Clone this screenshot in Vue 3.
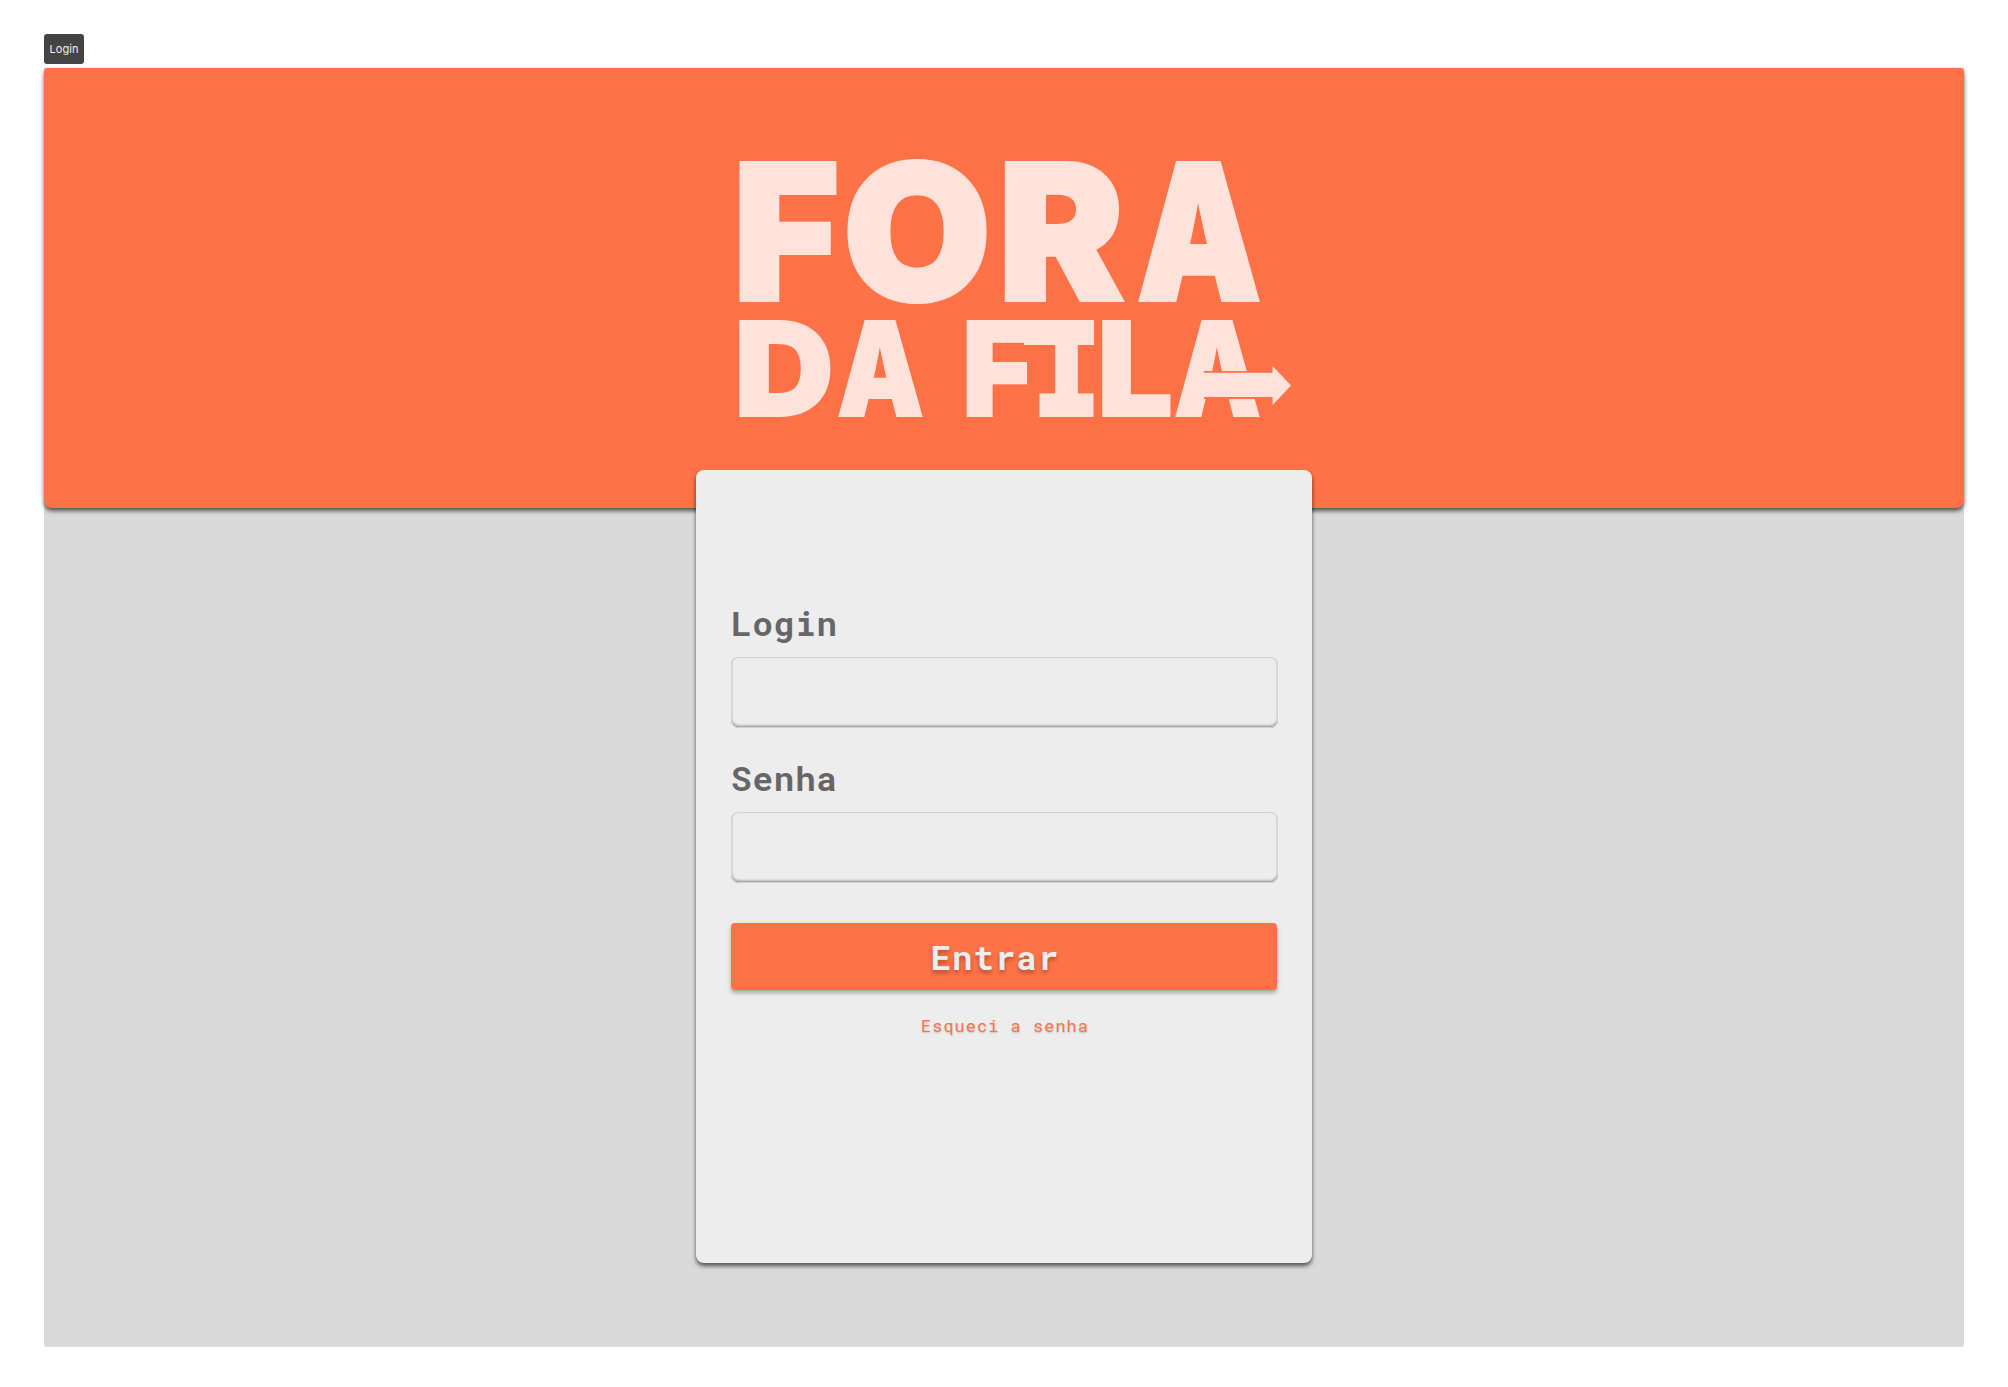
<script setup>
const rows = [
  {
    y: 300, size: 188, stroke: 4,
    letters: [
      { c: 'F', x: 733, w: 106 }, { c: 'O', x: 843, w: 148 },
      { c: 'R', x: 998, w: 126 }, { c: 'A', x: 1137, w: 124 },
    ],
  },
  {
    y: 415.5, size: 130.5, stroke: 2,
    letters: [
      { c: 'D', x: 734, w: 100 }, { c: 'A', x: 837, w: 87 },
      { c: 'F', x: 962, w: 71 }, { c: 'I', x: 1034, w: 65, y: 412.5, size: 122, slab: true },
      { c: 'L', x: 1097, w: 76 }, { c: 'A', x: 1174, w: 87 },
    ],
  },
]
</script>

<template>
  <div class="page">
    <div class="tag">Login</div>
    <main class="screen">
      <header class="banner">
        <svg class="logo" viewBox="730 150 570 275" width="570" height="275" role="img">
          <template v-for="row in rows" :key="row.y">
            <text
              v-for="l in row.letters" :key="l.x" :class="{ slab: l.slab }"
              :x="l.x" :y="l.y ?? row.y" :font-size="l.size ?? row.size" :stroke-width="l.slab ? 8 : row.stroke"
              :textLength="l.w" lengthAdjust="spacingAndGlyphs"
            >{{ l.c }}</text>
          </template>
          <rect x="1024" y="320" width="70" height="25" />
          <path class="arrow-gap" d="M1204 371H1271V365L1293 385.5L1271 406V399H1204Z" />
          <path d="M1200 372.7H1272.6V366L1291 385.5L1272.6 405V397H1200Z" />
        </svg>
      </header>
      <form class="card" @submit.prevent>
        <label for="user">Login</label>
        <input id="user" type="text">
        <label for="pass">Senha</label>
        <input id="pass" type="password">
        <button type="submit">Entrar</button>
        <a class="forgot">Esqueci a senha</a>
      </form>
    </main>
  </div>
</template>

<style>
body { margin: 0; background: #fff; }
</style>

<style scoped>
.page { box-sizing: border-box; width: 2008px; height: 1387px; padding: 34px 44px 0; overflow: hidden; }
.tag {
  display: flex; align-items: center; justify-content: center;
  width: 40px; height: 30px; border-radius: 3px; margin-bottom: 4px;
  background: #444; color: #eee; font: 11px/28px Inter, sans-serif; letter-spacing: .1px;
}
.screen { height: 1279px; width: 1920px; background: #d9d9d9; border-radius: 3px; }
.banner {
  height: 440px; border-radius: 3px 3px 8px 8px; background: #ff7247;
  box-shadow: 0 3px 4px rgba(0, 0, 0, .62);
}
.logo { display: block; margin-left: 686px; padding-top: 82px; overflow: visible; fill: #ffe3da; }
.logo text { font-family: Inter, sans-serif; font-weight: 900; stroke: #ffe3da; }
.logo text.slab { font-family: "DejaVu Sans Mono", monospace; font-weight: 700; }
.arrow-gap { fill: #ff7247; }
.card {
  box-sizing: border-box; position: relative; width: 616px; height: 793px; margin: -38px auto 0;
  padding: 133px 35px 0; display: flex; flex-direction: column;
  background: #ededed; border-radius: 8px; box-shadow: 0 3px 4px rgba(0, 0, 0, .62);
  font-family: "Roboto Mono", "DejaVu Sans Mono", monospace;
}
label { height: 54px; line-height: 40px; font-size: 34px; font-weight: 700; letter-spacing: 1px; color: #666; }
input {
  box-sizing: border-box; width: 547px; height: 71px; margin: 0 0 30px; border: 0; border-radius: 8px;
  background: #ededed; outline: none;
  box-shadow: inset 0 0 0 1px #d2d2d2, inset 0 -2px 3px rgba(0, 0, 0, .45);
}
button {
  height: 67px; margin: 10px 0 0; padding: 0 26px 0 8px; border: 0; border-radius: 4px;
  background: #ff7247; color: #ededed; font: 700 34px/67px "Roboto Mono", "DejaVu Sans Mono", monospace;
  letter-spacing: 1.1px; text-shadow: 0 3px 4px rgba(0, 0, 0, .3);
  box-shadow: 0 3px 4px rgba(0, 0, 0, .3);
}
.forgot {
  margin-top: 24px; padding-left: 2px; text-align: center; font-size: 17px; line-height: 24px; letter-spacing: 1px;
  color: #ff7247; text-shadow: 0 1px 2px rgba(0, 0, 0, .2);
}
</style>
